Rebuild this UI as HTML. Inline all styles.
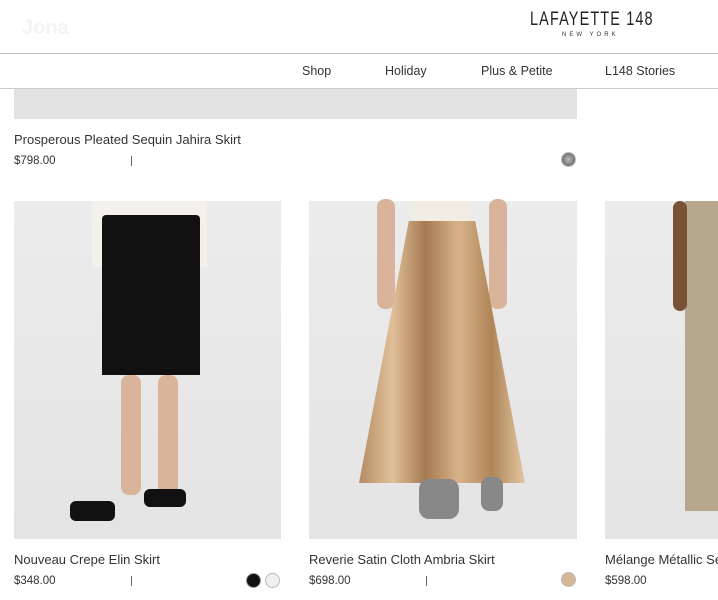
<!DOCTYPE html>
<html><head><style>
body{margin:0;width:718px;height:600px;overflow:hidden;background:#fff;font-family:"Liberation Sans",sans-serif;position:relative;color:#333}
.a{position:absolute}
.t{font-size:13px;color:#333;letter-spacing:0}
.n{font-size:12.5px;color:#333}
.p{font-size:11.5px;color:#333}
.bar{width:1px;height:10px;background:#666}
.sw{width:15px;height:15px;border-radius:50%;border:1px solid #bbb;box-sizing:border-box}
.img{background:linear-gradient(#ececec,#e4e4e4)}
</style></head><body>
<div class="a" style="left:22px;top:17px;font-size:20px;font-weight:bold;color:#f4f4f4">Jona</div>
<div class="a" style="left:530px;top:9px;font-size:19px;letter-spacing:1.5px;color:#222;transform:scaleX(.76);transform-origin:left">LAFAYETTE 148</div>
<div class="a" style="left:562px;top:32px;font-size:6px;letter-spacing:3px;color:#333">NEW YORK</div>
<div class="a" style="left:0;top:53px;width:718px;height:1px;background:#bbb"></div>
<div class="a" style="left:0;top:54px;width:718px;height:34px;background:#fff;border-bottom:1px solid #ccc"></div>
<div class="a n" style="left:302px;top:64px">Shop</div>
<div class="a n" style="left:385px;top:64px">Holiday</div>
<div class="a n" style="left:481px;top:64px">Plus &amp; Petite</div>
<div class="a n" style="left:605px;top:64px">L148 Stories</div>
<div class="a img" style="left:14px;top:89px;width:563px;height:30px;background:#e3e3e3"></div>
<div class="a t" style="left:14px;top:132px">Prosperous Pleated Sequin Jahira Skirt</div>
<div class="a p" style="left:14px;top:155px">$798.00</div>
<div class="a bar" style="left:131px;top:156px"></div>
<div class="a sw" style="left:561px;top:152px;background:radial-gradient(#bbb,#555)"></div>

<div class="a img" style="left:14px;top:201px;width:267px;height:338px">
 <div class="a" style="left:78px;top:0;width:115px;height:66px;background:#f4f1ec"></div>
 <div class="a" style="left:88px;top:14px;width:98px;height:160px;background:#111;border-radius:4px 4px 0 0"></div>
 <div class="a" style="left:107px;top:174px;width:20px;height:120px;background:#d9b39a;border-radius:8px"></div>
 <div class="a" style="left:144px;top:174px;width:20px;height:120px;background:#d9b39a;border-radius:8px"></div>
 <div class="a" style="left:56px;top:300px;width:45px;height:20px;background:#111;border-radius:6px"></div>
 <div class="a" style="left:130px;top:288px;width:42px;height:18px;background:#111;border-radius:6px"></div>
</div>
<div class="a img" style="left:309px;top:201px;width:268px;height:338px">
 <div class="a" style="left:104px;top:0;width:58px;height:20px;background:#f1ece4"></div>
 <div class="a" style="left:68px;top:-2px;width:18px;height:110px;background:#d9b39a;border-radius:8px"></div>
 <div class="a" style="left:180px;top:-2px;width:18px;height:110px;background:#d9b39a;border-radius:8px"></div>
 <div class="a" style="left:50px;top:20px;width:166px;height:262px;background:linear-gradient(90deg,#b58c62,#e0c09a,#a57a52,#d8b38a,#b08558,#e2c6a2);clip-path:polygon(30% 0,70% 0,100% 100%,0 100%)"></div>
 <div class="a" style="left:110px;top:278px;width:40px;height:40px;background:#888;border-radius:10px"></div>
 <div class="a" style="left:172px;top:276px;width:22px;height:34px;background:#888;border-radius:8px"></div>
</div>
<div class="a img" style="left:605px;top:201px;width:113px;height:338px">
 <div class="a" style="left:80px;top:0;width:33px;height:310px;background:#b5a88e"></div>
 <div class="a" style="left:68px;top:0;width:14px;height:110px;background:#7a5238;border-radius:8px"></div>
</div>

<div class="a t" style="left:14px;top:552px">Nouveau Crepe Elin Skirt</div>
<div class="a p" style="left:14px;top:575px">$348.00</div>
<div class="a bar" style="left:131px;top:576px"></div>
<div class="a sw" style="left:246px;top:573px;background:#111;border-color:#999"></div>
<div class="a sw" style="left:265px;top:573px;background:#efefef"></div>
<div class="a t" style="left:309px;top:552px">Reverie Satin Cloth Ambria Skirt</div>
<div class="a p" style="left:309px;top:575px">$698.00</div>
<div class="a bar" style="left:426px;top:576px"></div>
<div class="a sw" style="left:561px;top:572px;background:#d6b796"></div>
<div class="a t" style="left:605px;top:552px;white-space:nowrap">Mélange Métallic Se</div>
<div class="a p" style="left:605px;top:575px">$598.00</div>
</body></html>
